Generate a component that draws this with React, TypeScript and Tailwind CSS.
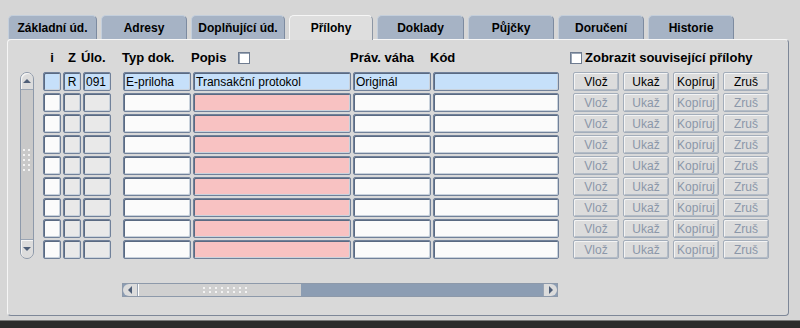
import { Fragment } from 'react'

const tabs = [
  { label: 'Základní úd.', w: 'w-[89px]' },
  { label: 'Adresy', w: 'w-[86px]' },
  { label: 'Doplňující úd.', w: 'w-[94px]' },
  { label: 'Přílohy', w: 'w-[84px]', active: true },
  { label: 'Doklady', w: 'w-[87px]' },
  { label: 'Půjčky', w: 'w-[86px]' },
  { label: 'Doručení', w: 'w-[86px]' },
  { label: 'Historie', w: 'w-[86px]' },
]

const cell =
  'h-[19px] rounded-[2px] border border-[#71819a] shadow-[inset_1px_1px_0_#5a6a82,inset_-1px_-1px_0_#c9d2dc] px-[2px] flex items-center text-[12px] leading-none overflow-hidden whitespace-nowrap'

function Row({ first }: { first?: boolean }) {
  const blue = 'bg-[#c6e0fa]'
  return (
    <div className="flex">
      <div className={`${cell} w-[18px] ${first ? blue : 'bg-[#fbfbfb]'}`} />
      <div className={`${cell} w-[18px] ml-[2px] justify-center ${first ? blue : 'bg-[#e9e9e9]'}`}>{first ? 'R' : ''}</div>
      <div className={`${cell} w-[28px] ml-[2px] ${first ? blue : 'bg-[#e9e9e9]'}`}>{first ? '091' : ''}</div>
      <div className={`${cell} w-[68px] ml-[12px] ${first ? blue : 'bg-[#fbfbfb]'}`}>{first ? 'E-priloha' : ''}</div>
      <div className={`${cell} w-[158px] ml-[2px] ${first ? blue : 'bg-[#f8c2c2]'}`}>{first ? 'Transakční protokol' : ''}</div>
      <div className={`${cell} w-[78px] ml-[2px] ${first ? blue : 'bg-[#fbfbfb]'}`}>{first ? 'Originál' : ''}</div>
      <div className={`${cell} w-[126px] ml-[2px] ${first ? blue : 'bg-[#fbfbfb]'}`} />
      <div className="flex gap-[4px] ml-[14px]">
        {['Vlož', 'Ukaž', 'Kopíruj', 'Zruš'].map((b) => (
          <div
            key={b}
            className={`w-[46px] h-[19px] rounded-[2px] border border-[#a3adba] bg-[#dcdcdc] shadow-[inset_1px_1px_0_#f4f4f4,inset_-1px_-1px_0_#b4bcc6] flex items-center justify-center text-[12px] ${
              first ? 'text-black' : 'text-[#8b97a9]'
            }`}
          >
            {b}
          </div>
        ))}
      </div>
    </div>
  )
}

function Checkbox() {
  return <div className="w-[12px] h-[12px] bg-white border border-[#6f7c90] shadow-[inset_1px_1px_0_#9aa6b6]" />
}

function Dots({ n }: { n: number }) {
  return (
    <Fragment>
      {Array.from({ length: n }).map((_, i) => (
        <span key={i} className="w-[2px] h-[2px] bg-white rounded-full" />
      ))}
    </Fragment>
  )
}

export default function App() {
  return (
    <div className="w-[800px] h-[328px] bg-[#d6d6d6] overflow-hidden flex flex-col font-['Liberation_Sans',Arial,sans-serif] text-black">
      {/* tabs */}
      <div className="flex gap-[4px] pl-[8px] pt-[15px] h-[39px]">
        {tabs.map((t) => (
          <div
            key={t.label}
            className={`${t.w} h-[24px] rounded-t-[5px] flex items-center justify-center text-[12px] font-bold border-t border-l border-r ${
              t.active
                ? 'bg-[#dedede] border-[#f6f6f6] border-r-[#8c96a4] h-[25px] relative z-10'
                : 'bg-[#a6b3c5] border-[#c4cfdc] border-r-[#7d8ba0]'
            }`}
          >
            {t.label}
          </div>
        ))}
      </div>

      {/* panel */}
      <div className="ml-[7px] w-[782px] h-[277px] rounded-[4px] border border-[#f6f6f6] border-r-[#7d8798] border-b-[#7d8798] bg-[#d9d9d9] pl-[12px] pt-[10px]">
        {/* header */}
        <div className="flex items-center h-[16px] text-[13px] font-bold ml-[23px]">
          <div className="w-[18px] text-center">i</div>
          <div className="w-[18px] ml-[2px] text-center">Z</div>
          <div className="w-[28px] ml-[0px]">Úlo.</div>
          <div className="w-[69px] ml-[13px]">Typ dok.</div>
          <div className="w-[158px] ml-[0px] flex items-center gap-[12px]">
            <span>Popis</span>
            <Checkbox />
          </div>
          <div className="w-[80px] ml-[1px]">Práv. váha</div>
          <div className="w-[140px]">Kód</div>
          <div className="flex items-center gap-[3px]">
            <Checkbox />
            <span>Zobrazit související přílohy</span>
          </div>
        </div>

        <div className="flex mt-[6px]">
          {/* vertical scrollbar */}
          <div className="w-[14px] h-[187px] flex flex-col rounded-[7px] border border-[#8d99aa] bg-[#c9c9c9]">
            <div className="h-[17px] rounded-t-[6px] bg-[#dcdcdc] border-b border-[#9aa5b4] shadow-[inset_1px_1px_0_#f6f6f6] flex items-center justify-center">
              <div className="w-0 h-0 border-l-[4px] border-r-[4px] border-b-[4px] border-l-transparent border-r-transparent border-b-[#4f5f78]" />
            </div>
            <div className="flex-1 flex items-center">
              <div className="grid grid-cols-2 gap-x-[3px] gap-y-[3px] ml-[2px] mt-[-10px]">
                <Dots n={10} />
              </div>
            </div>
            <div className="h-[19px] rounded-b-[6px] bg-[#dcdcdc] border-t border-[#9aa5b4] shadow-[inset_1px_1px_0_#f6f6f6] flex items-center justify-center">
              <div className="w-0 h-0 border-l-[4px] border-r-[4px] border-t-[4px] border-l-transparent border-r-transparent border-t-[#4f5f78]" />
            </div>
          </div>

          <div className="ml-[9px] flex flex-col gap-[2px]">
            <Row first />
            {Array.from({ length: 8 }).map((_, i) => (
              <Row key={i} />
            ))}
          </div>
        </div>

        {/* horizontal scrollbar */}
        <div className="ml-[102px] mt-[24px] w-[436px] h-[14px] flex border border-[#8d99aa] bg-[#8c9db3]">
          <div className="w-[15px] bg-[#dcdcdc] rounded-l-[6px] border-r border-[#9aa5b4] flex items-center justify-center">
            <div className="w-0 h-0 border-t-[4px] border-b-[4px] border-r-[4px] border-t-transparent border-b-transparent border-r-[#4f5f78]" />
          </div>
          <div className="w-[163px] bg-[#d0d0d0] border-l border-white flex items-center justify-center">
            <div className="grid grid-cols-8 gap-x-[4px] gap-y-[2px] ml-[10px]">
              <Dots n={16} />
            </div>
          </div>
          <div className="flex-1" />
          <div className="w-[14px] bg-[#dcdcdc] rounded-r-[6px] border-l border-[#9aa5b4] flex items-center justify-center">
            <div className="w-0 h-0 border-t-[4px] border-b-[4px] border-l-[4px] border-t-transparent border-b-transparent border-l-[#4f5f78]" />
          </div>
        </div>
      </div>

      <div className="h-[4px]" />
      <div className="h-[1px] bg-[#7a7a7a]" />
      <div className="flex-1 bg-[#2c2c2c]" />
    </div>
  )
}
